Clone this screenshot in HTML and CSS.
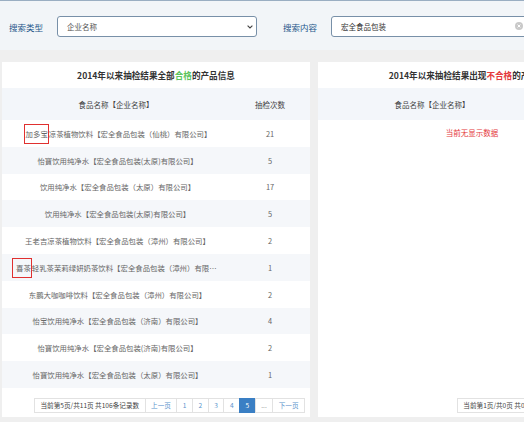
FILE: index.html
```html
<!DOCTYPE html>
<html lang="zh-CN">
<head>
    <meta charset="UTF-8">
    <title>抽检结果查询</title>
    <link rel="stylesheet" href="styles.css">
</head>
<body>
    <div class="page">
        <div class="search-bar">
            <span class="search-label">搜索类型</span>
            <div class="select-box">
                <span>企业名称</span>
                <svg class="chevron" width="6" height="4" viewBox="0 0 6 4"><path d="M0.6 0.6 L3 3 L5.4 0.6" fill="none" stroke="#444" stroke-width="1.1"/></svg>
            </div>
            <span class="search-label second">搜索内容</span>
            <div class="input-box">
                <span>宏全食品包装</span>
                <span class="clear-btn">
                    <svg width="8" height="8" viewBox="0 0 8 8"><circle cx="4" cy="4" r="4" fill="#c9c9c9"/><path d="M2.6 2.6 L5.4 5.4 M5.4 2.6 L2.6 5.4" stroke="#fff" stroke-width="1"/></svg>
                </span>
            </div>
        </div>

        <div class="panels">
            <div class="panel">
                <div class="panel-title">2014年以来抽检结果全部<span class="ok">合格</span>的产品信息</div>
                <table class="result-table">
                    <colgroup><col class="col-name"><col class="col-count"></colgroup>
                    <thead>
                        <tr><th>食品名称【企业名称】</th><th>抽检次数</th></tr>
                    </thead>
                    <tbody>
                        <tr><td><span class="mark first">加多宝</span>凉茶植物饮料【宏全食品包装（仙桃）有限公司】</td><td>21</td></tr>
                        <tr><td>怡寶饮用纯净水【宏全食品包装(太原)有限公司】</td><td>5</td></tr>
                        <tr><td>饮用纯净水【宏全食品包装（太原）有限公司】</td><td>17</td></tr>
                        <tr><td>饮用纯净水【宏全食品包装(太原)有限公司】</td><td>5</td></tr>
                        <tr><td>王老吉凉茶植物饮料【宏全食品包装（漳州）有限公司】</td><td>2</td></tr>
                        <tr><td><span class="mark">喜茶</span>轻乳茶茉莉绿妍奶茶饮料【宏全食品包装（漳州）有限公司】</td><td>1</td></tr>
                        <tr><td>东鹏大咖咖啡饮料【宏全食品包装（漳州）有限公司】</td><td>2</td></tr>
                        <tr><td>怡宝饮用纯净水【宏全食品包装（济南）有限公司】</td><td>4</td></tr>
                        <tr><td>怡寶饮用纯净水【宏全食品包装(济南)有限公司】</td><td>2</td></tr>
                        <tr><td>怡寶饮用纯净水【宏全食品包装（太原）有限公司】</td><td>1</td></tr>
                    </tbody>
                </table>
                <div class="pager">
                    <span class="pager-info">当前第5页/共11页 共106条记录数</span>
                    <a href="#">上一页</a>
                    <a href="#">1</a>
                    <a href="#">2</a>
                    <a href="#">3</a>
                    <a href="#">4</a>
                    <a href="#" class="active">5</a>
                    <span class="dots">...</span>
                    <a href="#">下一页</a>
                </div>
            </div>

            <div class="panel">
                <div class="panel-title">2014年以来抽检结果出现<span class="bad">不合格</span>的产品信息</div>
                <table class="result-table">
                    <colgroup><col class="col-name"><col class="col-count"></colgroup>
                    <thead>
                        <tr><th>食品名称【企业名称】</th><th>抽检次数</th></tr>
                    </thead>
                </table>
                <div class="empty-tip">当前无显示数据</div>
                <div class="pager">
                    <span class="pager-info">当前第1页/共0页 共0条记录数</span>
                    <a href="#">上一页</a>
                    <a href="#">下一页</a>
                </div>
            </div>
        </div>
    </div>
</body>
</html>
```

FILE: styles.css
```css
* {
    margin: 0;
    padding: 0;
    box-sizing: border-box;
}

body {
    font-family: "Noto Sans CJK SC", "Noto Sans", sans-serif;
    background-color: #efefef;
    overflow: hidden;
}

.page {
    width: 630px;
}

/* search bar */
.search-bar {
    height: 50px;
    display: flex;
    align-items: center;
    padding: 2px 0 0 9px;
    background-color: #f2f5f8;
    border-top: 1px solid #9aaec2;
}

.search-label {
    font-size: 8.5px;
    color: #24568a;
    margin-right: 14px;
}

.search-label.second {
    margin-left: 26px;
}

.select-box,
.input-box {
    position: relative;
    height: 21px;
    display: flex;
    align-items: center;
    padding-left: 9px;
    background-color: #fff;
    border: 1px solid #7890a8;
    border-radius: 3px;
    font-size: 7.5px;
}

.select-box {
    width: 200px;
    color: #555;
}

.input-box {
    width: 200px;
    color: #333;
}

.chevron {
    position: absolute;
    right: 3px;
    top: 8px;
}

.clear-btn {
    position: absolute;
    right: 7px;
    top: 5px;
    line-height: 0;
}

/* panels */
.panels {
    display: flex;
    gap: 8px;
    padding: 12px 2px 0;
}

.panel {
    width: 308px;
    display: flex;
    flex-direction: column;
    background-color: #fff;
    padding-bottom: 4px;
}

.panel-title {
    height: 26px;
    line-height: 26px;
    text-align: center;
    font-size: 8.6px;
    font-weight: bold;
    color: #333;
}

.panel-title .ok {
    color: #5cc45c;
}

.panel-title .bad {
    color: #e4393c;
}

.result-table {
    width: 100%;
    border-collapse: collapse;
    table-layout: fixed;
}

.col-name {
    width: 228px;
}

.result-table th {
    height: 32px;
    font-size: 7.5px;
    font-weight: normal;
    color: #444;
    background-color: #f3f6fa;
}

.result-table td {
    height: 26.8px;
    padding: 0 7px 0 10px;
    text-align: center;
    font-size: 7.4px;
    color: #666;
    white-space: nowrap;
    overflow: hidden;
    text-overflow: ellipsis;
}

.result-table td:last-child {
    padding: 0;
}

.result-table tbody tr:nth-child(even) td {
    background-color: #f5f7fa;
}

.mark {
    border: 1px solid #e0302f;
    padding: 3px 0 4px 3px;
}

.mark.first {
    padding-left: 1px;
}

.empty-tip {
    height: 25px;
    line-height: 25px;
    text-align: center;
    font-size: 7.5px;
    color: #e4393c;
}

/* pager */
.pager {
    display: flex;
    justify-content: flex-end;
    margin-top: auto;
    padding: 10px 5px 0;
}

.pager a,
.pager span {
    height: 15px;
    line-height: 13px;
    padding: 0 5.5px;
    font-size: 6.6px;
    border: 1px solid #e2e2e2;
    margin-left: -1px;
    text-decoration: none;
    color: #5b93cc;
}

.pager .pager-info {
    color: #444;
}

.pager .dots {
    color: #999;
}

.pager a.active {
    background-color: #3a7fc4;
    border-color: #3a7fc4;
    color: #fff;
}
```
